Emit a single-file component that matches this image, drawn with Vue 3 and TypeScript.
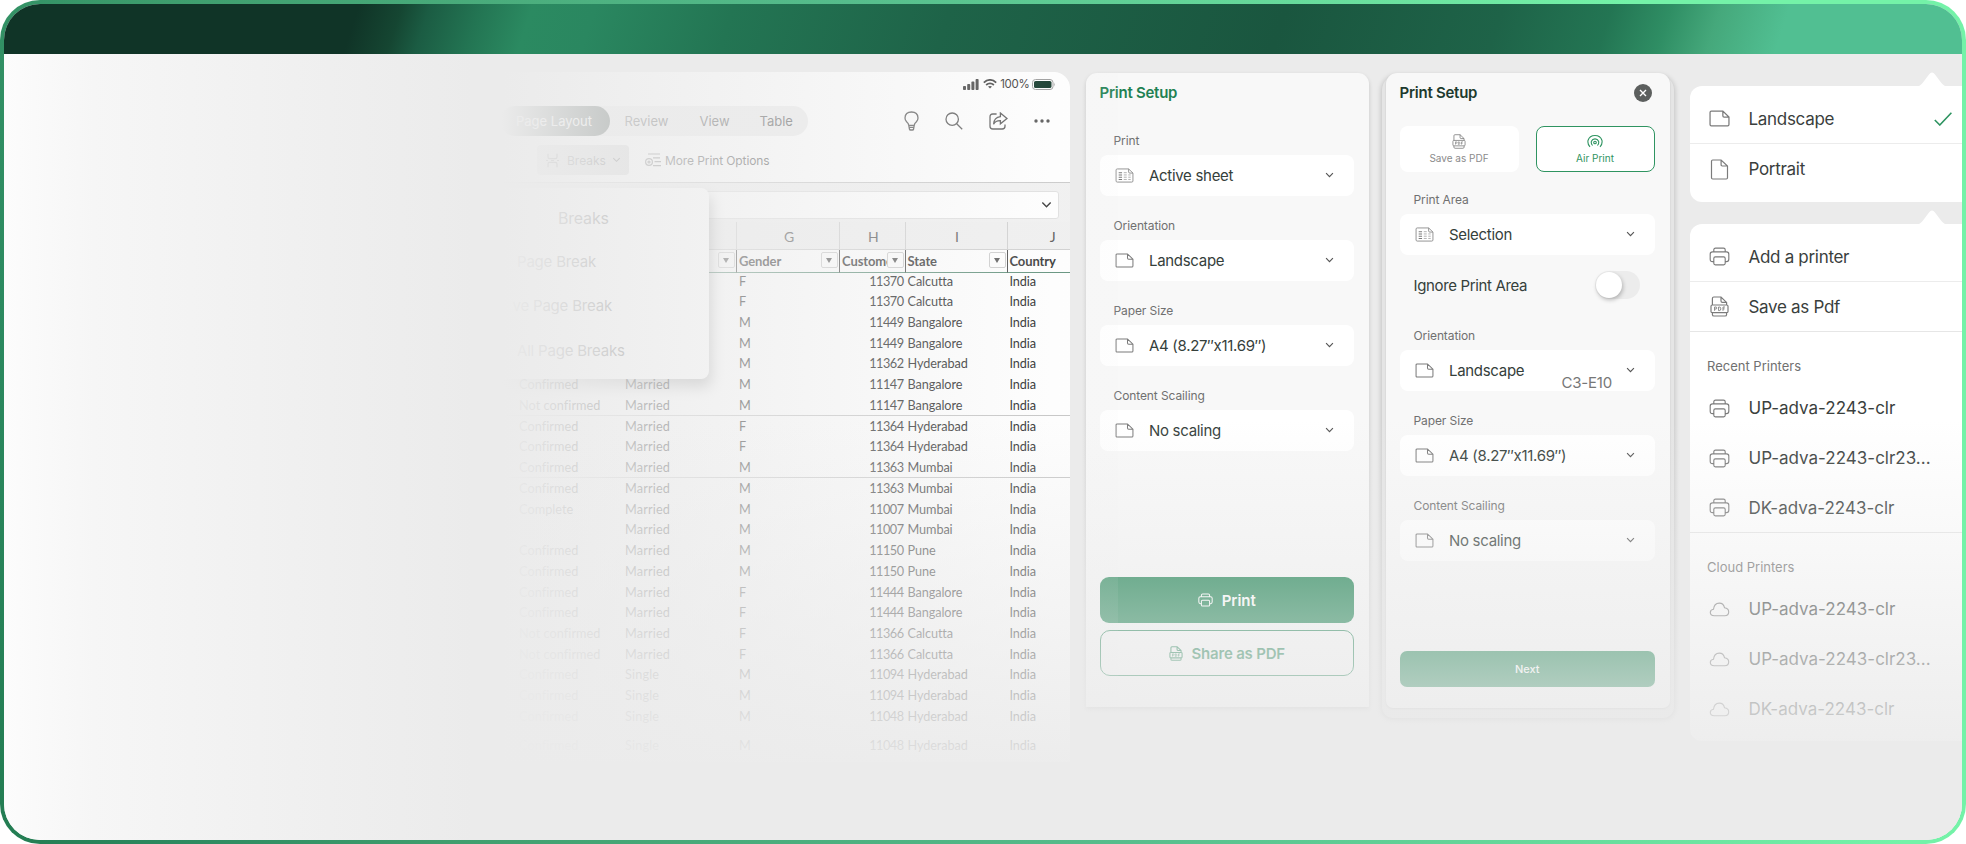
<script setup lang="ts">
interface Row {
  status: string
  marital: string
  gender: string
  id: string
  state: string
  ruled?: boolean
}
interface Field {
  label: string
  icon: string
  value: string
}

const row = (status: string, marital: string, gender: string, id: string, state: string, ruled = false): Row =>
  ({ status, marital, gender, id, state, ruled })

const rows: Row[] = [
  row('', '', 'F', '11370', 'Calcutta'),
  row('', '', 'F', '11370', 'Calcutta'),
  row('', '', 'M', '11449', 'Bangalore'),
  row('', '', 'M', '11449', 'Bangalore'),
  row('', '', 'M', '11362', 'Hyderabad'),
  row('Confirmed', 'Married', 'M', '11147', 'Bangalore'),
  row('Not confirmed', 'Married', 'M', '11147', 'Bangalore', true),
  row('Confirmed', 'Married', 'F', '11364', 'Hyderabad'),
  row('Confirmed', 'Married', 'F', '11364', 'Hyderabad'),
  row('Confirmed', 'Married', 'M', '11363', 'Mumbai', true),
  row('Confirmed', 'Married', 'M', '11363', 'Mumbai'),
  row('Complete', 'Married', 'M', '11007', 'Mumbai'),
  row('', 'Married', 'M', '11007', 'Mumbai'),
  row('Confirmed', 'Married', 'M', '11150', 'Pune'),
  row('Confirmed', 'Married', 'M', '11150', 'Pune'),
  row('Confirmed', 'Married', 'F', '11444', 'Bangalore'),
  row('Confirmed', 'Married', 'F', '11444', 'Bangalore'),
  row('Not confirmed', 'Married', 'F', '11366', 'Calcutta'),
  row('Not confirmed', 'Married', 'F', '11366', 'Calcutta'),
  row('Confirmed', 'Single', 'M', '11094', 'Hyderabad'),
  row('Confirmed', 'Single', 'M', '11094', 'Hyderabad'),
  row('Confirmed', 'Single', 'M', '11048', 'Hyderabad'),
  row('Confirmed', 'Single', 'M', '11048', 'Hyderabad'),
]

const setupFields: Field[] = [
  { label: 'Print', icon: 'sheet', value: 'Active sheet' },
  { label: 'Orientation', icon: 'landscape', value: 'Landscape' },
  { label: 'Paper Size', icon: 'landscape', value: 'A4 (8.27″x11.69″)' },
  { label: 'Content Scailing', icon: 'landscape', value: 'No scaling' },
]
const airFields: Field[] = setupFields.slice(1)
const printers: string[] = ['UP-adva-2243-clr', 'UP-adva-2243-clr23...', 'DK-adva-2243-clr']
</script>

<template>
  <div class="frame">
    <svg class="defs" aria-hidden="true">
      <symbol id="landscape" viewBox="0 0 20 16">
        <path d="M2.2 1H13.2L19 6.6V13.8Q19 15 17.8 15H2.2Q1 15 1 13.8V2.2Q1 1 2.2 1ZM13.2 1V5.4Q13.2 6.6 14.4 6.6H19" />
      </symbol>
      <symbol id="portrait" viewBox="0 0 18 21">
        <path d="M2.2 1H10.6L17 7V18.8Q17 20 15.8 20H2.2Q1 20 1 18.8V2.2Q1 1 2.2 1ZM10.6 1V5.8Q10.6 7 11.8 7H17" />
      </symbol>
      <symbol id="sheet" viewBox="0 0 20 16">
        <path d="M2.2 1H14.4L19 5.4V13.8Q19 15 17.8 15H2.2Q1 15 1 13.8V2.2Q1 1 2.2 1ZM14.4 1V4.2Q14.4 5.4 15.6 5.4H19" stroke="#8f8f8f" stroke-width="1" />
        <path d="M3.8 5H7.4M3.8 7.4H7.4M3.8 9.8H7.4M3.8 12.2H7.4" stroke-width="1.1" />
        <path d="M9.2 5H12.4M9.2 7.4H12.4M9.2 9.8H12.4M9.2 12.2H12.4M14 7.4H16.6M14 9.8H16.6M14 12.2H16.6" stroke="#999" stroke-width=".8" />
      </symbol>
      <symbol id="printer" viewBox="0 0 22 20">
        <path d="M5 5.2V3Q5 1.2 6.8 1.2H15.2Q17 1.2 17 3V5.2M5 15.4H3.6Q1.2 15.4 1.2 13V7.6Q1.2 5.2 3.6 5.2H18.4Q20.8 5.2 20.8 7.6V13Q20.8 15.4 18.4 15.4H17M6.6 10.4H15.4Q17 10.4 17 12V17.2Q17 18.8 15.4 18.8H6.6Q5 18.8 5 17.2V12Q5 10.4 6.6 10.4Z" />
      </symbol>
      <symbol id="pdf" viewBox="0 0 19 21">
        <path d="M2.4 9V2.4Q2.4 1 3.8 1H11L16.6 6.4V9M11 1V5Q11 6.4 12.4 6.4H16.6M2.2 9H16.8Q18 9 18 10.2V15.4Q18 16.6 16.8 16.6H2.2Q1 16.6 1 15.4V10.2Q1 9 2.2 9ZM2.4 16.6V18.4Q2.4 20 4 20H15Q16.6 20 16.6 18.4V16.6" />
        <path d="M4.6 14.8V11H5.8Q6.8 11 6.8 12T5.8 13H4.6M8.6 11V14.6H9.4Q10.8 14.6 10.8 12.8T9.4 11ZM13 14.8V11H15M13 12.9H14.6" stroke-width=".9" />
      </symbol>
      <symbol id="cloud" viewBox="0 0 22 16">
        <path d="M5.4 14.6Q1.2 14.4 1.2 11.2Q1.2 8.2 4.6 7.8Q5.2 1.2 10.8 1.2Q15.4 1.2 16.4 6.2Q20.8 6.8 20.8 10.6Q20.8 14.4 16.6 14.6Z" />
      </symbol>
      <symbol id="chev" viewBox="0 0 10 7"><path d="M1.2 1.2L5 5L8.8 1.2" /></symbol>
    </svg>

    <div class="window">
      <header class="banner"></header>
      <main class="stage">
        <section class="sheet">
          <div class="status">
            <svg width="16" height="11" viewBox="0 0 16 11"><g fill="#3f3f3f"><rect x="0" y="7" width="3" height="4" rx=".8" /><rect x="4.2" y="5" width="3" height="6" rx=".8" /><rect x="8.4" y="2.6" width="3" height="8.4" rx=".8" /><rect x="12.6" y="0" width="3" height="11" rx=".8" /></g></svg>
            <svg width="14" height="10" viewBox="0 0 14 10"><path d="M.8 3.6Q7-1.8 13.2 3.6M3.1 6Q7 2.8 10.9 6" stroke="#3f3f3f" stroke-width="1.8" /><path d="M7 9.6L5 7.6Q7 6.2 9 7.6Z" fill="#3f3f3f" stroke="none" /></svg>
            <span>100%</span>
            <svg width="24" height="11" viewBox="0 0 24 11"><rect x=".5" y=".5" width="20.5" height="10" rx="3" stroke="#9a9a9a" /><rect x="2" y="2" width="17.5" height="7" rx="1.6" fill="#0c3324" /><path d="M22.2 3.6Q23.6 5.5 22.2 7.4Z" fill="#9a9a9a" /></svg>
          </div>
          <div class="tabbar">
            <div class="tabs">
              <span class="tab active">Page Layout</span>
              <span class="tab review">Review</span>
              <span class="tab view">View</span>
              <span class="tab table">Table</span>
            </div>
            <div class="tools">
              <svg width="15" height="20" viewBox="0 0 15 20"><path d="M4.8 14.4Q4.6 12.6 2.6 10.8Q1 9 1 6.9Q1.2 1 7.5 1T14 6.9Q14 9 12.4 10.8Q10.4 12.6 10.2 14.4ZM4.8 14.4L5.4 18Q5.6 19 6.6 19H8.4Q9.4 19 9.6 18L10.2 14.4M5.2 16.4H9.8" /></svg>
              <svg width="18" height="18" viewBox="0 0 18 18"><circle cx="7.2" cy="7.2" r="6.2" /><path d="M11.7 11.7L17.2 17.2" /></svg>
              <svg width="19" height="18" viewBox="0 0 19 18"><path d="M7.6 2H3.8Q1 2 1 4.8V14.2Q1 17 3.8 17H13.2Q16 17 16 14.2V12.4M11.4 1L18 6.4L11.4 11.8V8.6Q6.6 8.4 4.6 12.2Q5 5.2 11.4 4.6Z" /></svg>
              <svg width="16" height="4" viewBox="0 0 16 4"><g fill="#555" stroke="none"><circle cx="2" cy="2" r="1.7" /><circle cx="8" cy="2" r="1.7" /><circle cx="14" cy="2" r="1.7" /></g></svg>
            </div>
          </div>
          <div class="ribbon">
            <div class="breaks-btn">
              <svg width="13" height="15" viewBox="0 0 13 15"><path d="M2 .8V4Q2 5.6 3.6 5.6H9.4Q11 5.6 11 4V.8M2 14.2V11Q2 9.4 3.6 9.4H9.4Q11 9.4 11 11V14.2M0 7.5H2M5 7.5H8M11 7.5H13" /></svg>
              <span>Breaks</span>
              <svg width="9" height="6"><use href="#chev" /></svg>
            </div>
            <div class="more">
              <svg width="16" height="14" viewBox="0 0 16 14"><path d="M3 1H15M8 4.8H15M9.5 8.6H16M8 12.6H16" /><circle cx="4" cy="9" r="3.4" /><circle cx="4" cy="9" r="1" /></svg>
              <span>More Print Options</span>
            </div>
          </div>
          <div class="formula"><div class="formula-input"><svg width="11" height="8"><use href="#chev" /></svg></div></div>
          <div class="grid letters"><span></span><span></span><span>G</span><span>H</span><span>I</span><span class="last">J</span></div>
          <div class="grid heads">
            <span></span>
            <span><i class="filter"></i></span>
            <span>Gender<i class="filter"></i></span>
            <span class="clip">Customer<i class="filter"></i></span>
            <span>State<i class="filter"></i></span>
            <span>Country</span>
          </div>
          <div v-for="(r, i) in rows" :key="i" class="grid row" :class="{ ruled: r.ruled, spaced: i === rows.length - 1 }">
            <span class="stat">{{ r.status }}</span>
            <span class="marital">{{ r.marital }}</span>
            <span>{{ r.gender }}</span>
            <span class="num">{{ r.id }}</span>
            <span>{{ r.state }}</span>
            <span>India</span>
          </div>
          <div class="popover">
            <div class="pop-item title">Breaks</div>
            <div class="pop-item">Page Break</div>
            <div class="pop-item remove">ve Page Break</div>
            <div class="pop-item">All Page Breaks</div>
          </div>
        </section>

        <section class="panel setup">
          <h2 class="green">Print Setup</h2>
          <div v-for="f in setupFields" :key="f.label" class="group">
            <label>{{ f.label }}</label>
            <div class="field">
              <svg class="ficon"><use :href="'#' + f.icon" /></svg>
              <span>{{ f.value }}</span>
              <svg class="fchev"><use href="#chev" /></svg>
            </div>
          </div>
          <button class="print"><svg width="15" height="14"><use href="#printer" /></svg>Print</button>
          <button class="share"><svg width="14" height="15"><use href="#pdf" /></svg>Share as PDF</button>
        </section>

        <section class="panel air">
          <div class="air-head">
            <h2>Print Setup</h2>
            <svg width="18" height="18" viewBox="0 0 18 18"><circle cx="9" cy="9" r="9" fill="#5c5f5e" stroke="none" /><path d="M6 6L12 12M12 6L6 12" stroke="#fff" stroke-width="1.4" /></svg>
          </div>
          <div class="modes">
            <div class="mode"><svg width="14" height="15"><use href="#pdf" /></svg>Save as PDF</div>
            <div class="mode on">
              <svg width="16" height="14" viewBox="0 0 16 14"><circle cx="8" cy="8" r="1.3" /><path d="M5.6 11Q3.8 9 4.4 6.8Q5.4 4.4 8 4.4T11.6 6.8Q12.2 9 10.4 11M3 12.4Q.4 9.8 1 6Q2.6 1 8 1T15 6Q15.6 9.8 13 12.4" /></svg>Air Print
            </div>
          </div>
          <div class="group area">
            <label>Print Area</label>
            <div class="field">
              <svg class="ficon"><use href="#sheet" /></svg><span>Selection</span>
              <svg class="fchev"><use href="#chev" /></svg>
            </div>
          </div>
          <div class="ignore"><span>Ignore Print Area</span><div class="toggle"><i></i></div></div>
          <div v-for="(f, i) in airFields" :key="f.label" class="group">
            <label>{{ f.label }}</label>
            <div class="field">
              <svg class="ficon"><use :href="'#' + f.icon" /></svg>
              <span>{{ f.value }}</span>
              <em v-if="i === 0">C3-E10</em>
              <svg class="fchev"><use href="#chev" /></svg>
            </div>
          </div>
          <button class="next">Next</button>
        </section>

        <section class="lists">
          <div class="card first">
            <svg class="caret" width="34" height="15" viewBox="0 0 34 15"><path d="M0 15Q5 14.6 8 10.5L14 2.6Q17-1.4 20 2.6L26 10.5Q29 14.6 34 15Z" fill="#fff" /></svg>
            <div class="item top"><svg width="21" height="17"><use href="#landscape" /></svg><span>Landscape</span><svg class="check" width="18" height="14" viewBox="0 0 18 14"><path d="M.8 8L5.8 13L17.4 .8" /></svg></div>
            <div class="item plain"><svg width="21" height="21"><use href="#portrait" /></svg><span>Portrait</span></div>
          </div>
          <div class="card second">
            <svg class="caret" width="34" height="15" viewBox="0 0 34 15"><path d="M0 15Q5 14.6 8 10.5L14 2.6Q17-1.4 20 2.6L26 10.5Q29 14.6 34 15Z" fill="#fff" /></svg>
            <div class="item top"><svg width="21" height="19"><use href="#printer" /></svg><span>Add a printer</span></div>
            <div class="item ruled"><svg width="21" height="21"><use href="#pdf" /></svg><span>Save as Pdf</span></div>
            <div class="caption">Recent Printers</div>
            <div v-for="(p, i) in printers" :key="p" class="item device" :class="{ ruled: i === 2 }"><svg width="21" height="19"><use href="#printer" /></svg><span>{{ p }}</span></div>
            <div class="caption cloudy">Cloud Printers</div>
            <div v-for="p in printers" :key="p" class="item device"><svg width="21" height="15"><use href="#cloud" /></svg><span>{{ p }}</span></div>
          </div>
        </section>
        <div class="fade-side"></div>
        <div class="fade-bottom"></div>
      </main>
    </div>
  </div>
</template>

<style>
body { margin: 0; background: #fff; }
</style>

<style scoped>
* { box-sizing: border-box; }
.frame {
  width: 1966px; height: 844px; padding: 4px; border-radius: 40px;
  background: linear-gradient(72deg, #237c52 0, #2c8a60 8%, #3f9e6e 20%, #56bd8c 50%, #74f2a8 85%);
  font-family: Inter, "Liberation Sans", sans-serif; color: #35403b;
}
.defs { position: absolute; width: 0; height: 0; }
svg { fill: none; stroke: #7b7b7b; stroke-width: 1.2; flex: none; display: block; }
.window { height: 836px; border-radius: 36px; overflow: hidden; background: #ebebeb; }
.banner {
  height: 50px;
  background: linear-gradient(108deg, #103427 18%, #154632 20.2%, #1b5c43 21.6%, #237553 24.2%, #2b8a61 26.8%, #2a8760 30%, #237553 37%, #1e6348 48%, #1a563f 65%, #1e6348 76%, #237553 81.5%, #2f8e64 84.5%, #45a87b 87%, #51bf92 90.5%);
}
.stage {
  position: relative; display: flex; align-items: flex-start; height: 786px; padding-left: 496px;
  background: linear-gradient(90deg, #fcfcfc 0, #f6f6f6 90px, #f2f2f2 220px, #eee 360px, #ebebeb 470px);
}

/* spreadsheet */
.sheet { position: relative; width: 570px; height: 690px; margin-top: 18px; background: #fff; border-radius: 0 16px 0 0; color: #4a4a4a; overflow: hidden; }
.status { display: flex; align-items: center; justify-content: flex-end; height: 24px; padding-right: 14px; font-size: 11.5px; color: #333; }
.status svg { stroke: none; stroke-width: 1; }
.status svg:first-child { margin-right: 3.5px; }
.status svg:last-child { margin-left: 2.5px; }
.status span { margin-left: 3.5px; letter-spacing: -.3px; }
.tabbar { display: flex; align-items: center; justify-content: space-between; height: 49px; }
.tabs { display: flex; align-items: center; width: 308px; height: 30px; border-radius: 0 15px 15px 0; background: #ededed; font-size: 13px; }
.tab.active { width: 109.5px; height: 30px; line-height: 30px; padding-left: 16px; border-radius: 15px; background: #24332c; color: #fff; }
.tab.review { margin-left: 15px; width: 75px; }
.tab.view { width: 60px; }
.tabs, .more, .breaks-btn { color: #555; }
.tools { display: flex; align-items: center; padding-right: 20px; }
.tools svg { stroke: #5a5a5a; stroke-width: 1.3; margin-left: 26px; }
.ribbon { display: flex; align-items: center; height: 37.5px; padding-bottom: 6px; border-bottom: 1px solid #c9c9c9; }
.breaks-btn { display: flex; align-items: center; width: 92px; height: 30px; margin-left: 37px; padding-left: 9px; border-radius: 4px; background: #d5d5d5; font-size: 12px; }
.breaks-btn svg { stroke: #555; }
.breaks-btn span { margin: 0 6px 0 8px; }
.more { display: flex; align-items: center; margin-left: 16px; font-size: 12px; letter-spacing: -.1px; }
.more span { margin-left: 4px; }
.formula { height: 39px; padding-top: 8px; background: #f1f1f1; }
.formula-input { display: flex; align-items: center; justify-content: flex-end; width: 559px; height: 28px; padding-right: 6px; border: 1px solid #e0e0e0; border-radius: 3px; background: #fff; }
.formula-input svg { stroke: #333; stroke-width: 1.3; }
.grid { display: grid; grid-template-columns: 125px 112px 103px 65.5px 102px 62.5px; }
.grid > span { position: relative; white-space: nowrap; padding-left: 2px; }
.letters { height: 28.5px; background: #f0f0f0; border-bottom: 1px solid #cfcfcf; font: 14px/30px Lato, sans-serif; color: #555; }
.letters > span { text-align: center; border-right: 1px solid #cfcfcf; }
.letters .last { border: 0; padding-left: 28px; }
.heads { height: 20.5px; font: bold 13px/22px Lato, sans-serif; letter-spacing: -.1px; color: #333; }
.heads > span { border-bottom: 1px solid #5e8f79; border-right: 1px solid #444; }
.heads .clip { overflow: hidden; }
.heads > span:last-child { border-right: 0; }
.filter { position: absolute; right: 1px; top: 2px; width: 17px; height: 16px; border: 1px solid #ccc; border-radius: 2px; background: #fff; }
.filter::after { content: ""; position: absolute; left: 4px; top: 5px; border: 3.5px solid transparent; border-top: 5px solid #555; border-bottom: 0; }
.row { height: 20.74px; font: 12.7px/21.4px Lato, sans-serif; letter-spacing: -.1px; color: #222; }
.row.ruled { box-shadow: 0 -1px 0 #c4c4c4 inset; }
.row.spaced { margin-top: 8px; }
.grid > .stat { padding-left: 19px; letter-spacing: .05px; }
.grid > .marital { padding-left: 0; letter-spacing: .15px; }
.grid > .num { text-align: right; padding-right: 2px; letter-spacing: -.5px; }
.popover { position: absolute; left: -20px; top: 116px; width: 229px; height: 191px; padding: 8.5px 0 0 37px; border-radius: 0 8px 8px 0; background: #fff; box-shadow: 2px 8px 14px rgba(0, 0, 0, .3); }
.pop-item { height: 44.4px; line-height: 42px; font-size: 15px; letter-spacing: -.2px; color: #555; }
.pop-item.title { padding-left: 41px; font-size: 16px; }
.pop-item.remove { padding-left: 0; margin-left: -4.5px; }

/* print panels */
.panel { margin-top: 19px; padding: 0 14px; background: #f8f8f8; border-radius: 11px 11px 0 0; box-shadow: 0 2px 4px rgba(0, 0, 0, .16); }
.setup { width: 283px; height: 634px; margin-left: 15.5px; }
.air { width: 284px; height: 635px; margin-left: 17px; border-radius: 11px 11px 7px 7px; box-shadow: 0 1px 2px rgba(0, 0, 0, .14), 0 6px 0 4px #e5e5e5, 0 7px 5px 5px rgba(0, 0, 0, .17); }
h2 { margin: 0; height: 60px; font-size: 15px; font-weight: 600; line-height: 40px; letter-spacing: -.25px; color: #1d3a2e; }
h2.green { color: #1f8153; }
.group { height: 85px; }
label { display: block; height: 22px; padding-left: 14px; font-size: 12px; line-height: 16px; letter-spacing: -.1px; color: #707070; }
.field { position: relative; display: flex; align-items: center; width: 254.5px; height: 41px; padding: 0 20px 0 15px; border-radius: 8px; background: #fff; font-size: 15px; letter-spacing: -.3px; }
.ficon { width: 19px; height: 15px; stroke-width: 1.1; }
.field span { margin-left: 15.5px; }
.fchev { width: 9px; height: 6.5px; margin-left: auto; stroke: #555; stroke-width: 1.3; }
.field em { position: absolute; left: 162px; top: 23px; font-style: normal; color: #777; line-height: 20px; letter-spacing: -.2px; }
button { display: flex; align-items: center; justify-content: center; width: 254.5px; border: 0; font: 600 15px Inter, sans-serif; }
.print { height: 46px; margin-top: 104px; gap: 9px; border-radius: 9px; background: #157f4c; color: #fff; }
.print svg { stroke: #fff; stroke-width: 1.5; }
.share { height: 46px; margin-top: 7px; gap: 9px; padding-left: 6px; letter-spacing: -.2px; border: 1.5px solid #1f8153; border-radius: 10px; background: transparent; color: #1f8153; }
.share svg { stroke: #1f8153; stroke-width: 1.5; }
.air-head { display: flex; justify-content: space-between; height: 53px; padding-right: 3px; }
.air-head svg { margin: 10.5px 1px 0 0; }
.modes { display: flex; gap: 17px; }
.air .field, .air button { width: 255.5px; }
.mode { display: flex; flex-direction: column; align-items: center; gap: 2px; width: 119px; height: 46px; padding-top: 8px; border-radius: 8px; background: #fff; font-size: 10px; line-height: 14px; color: #8b8b8b; }
.mode svg { stroke-width: 1.1; height: 15px; }
.mode.on { padding-top: 7px; border: 1.3px solid #2f9461; color: #2f9461; }
.mode.on svg { stroke: #2f9461; }
.area { height: 63px; margin-top: 20px; }
.ignore { display: flex; justify-content: space-between; align-items: center; height: 60px; margin-bottom: 12.5px; padding: 0 16px 0 14px; font-size: 15px; letter-spacing: -.35px; }
.toggle { width: 45px; height: 28px; border-radius: 14px; background: #ececec; }
.toggle i { display: block; width: 26px; height: 26px; margin: 1px; border-radius: 50%; background: #fff; box-shadow: 1px 2px 4px rgba(0, 0, 0, .25); }
.next { height: 36px; margin-top: 68px; border-radius: 7px; background: #157f4c; color: #fff; font-size: 11px; font-weight: 500; }

/* side lists */
.lists { width: 272px; margin-left: 20.5px; }
.card { position: relative; background: #fff; border-radius: 12px 0 0 12px; }
.caret { position: absolute; top: -14px; right: 13px; stroke: none; }
.first { height: 116.5px; margin-top: 31.5px; }
.second { height: 517px; margin-top: 21.5px; }
.item { display: flex; align-items: center; height: 50px; padding-left: 19px; font-size: 17px; letter-spacing: -.3px; color: #3a403d; }
.item span { margin-left: 18.5px; }
.item.device span { letter-spacing: 0; }
.item.top { height: 58.5px; padding-top: 9px; border-bottom: 1px solid #ececec; }
.item.ruled { border-bottom: 1px solid #e6e6e6; }
.check { margin-left: auto; margin-right: 10px; stroke: #2f9461; stroke-width: 1.6; }
.caption { height: 51px; padding: 18px 0 0 17px; font-size: 13px; line-height: 32px; letter-spacing: 0; color: #707070; }

/* washes that dissolve the mockups into the page */
.fade-side { position: absolute; left: 486px; top: 0; width: 628px; height: 786px; background: linear-gradient(90deg, #ebebeb 0, #ebebeb 12px, rgba(235, 235, 235, .1) 560px, rgba(235, 235, 235, .08) 100%); }
.fade-bottom { position: absolute; left: 486px; right: 0; top: 366px; bottom: 0; background: linear-gradient(180deg, rgba(235, 235, 235, 0) 0, #ebebeb 368px); }
</style>
